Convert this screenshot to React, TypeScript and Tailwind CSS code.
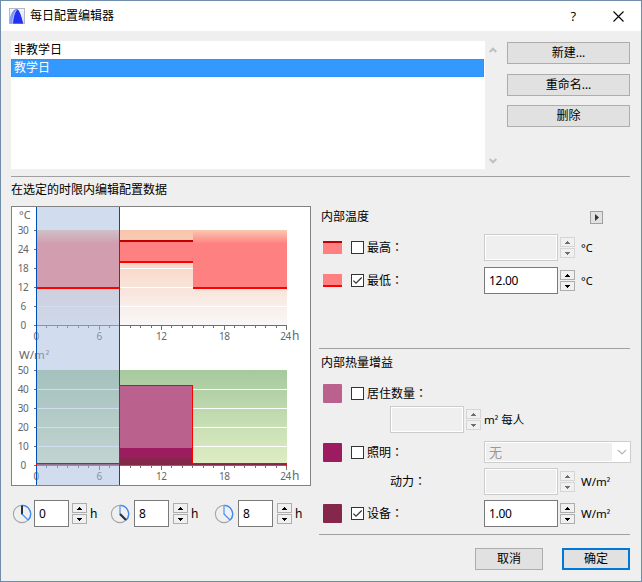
import React from "react";

function Arrow({ up, className }: { up?: boolean; className: string }) {
  return (
    <svg width="5" height="3" viewBox="0 0 5 3" shapeRendering="crispEdges" className={className}>
      {up ? <path d="M2 0h1v1h1v1h1v1H0V2h1V1h1z" fill="currentColor" /> : <path d="M0 0h5v1H4v1H3v1H2V2H1V1H0z" fill="currentColor" />}
    </svg>
  );
}

function Spinner({ disabled, className = "" }: { disabled?: boolean; className?: string }) {
  const look = disabled ? "border-[#d6d6d6] text-[#6d6d6d]" : "border-[#adadad] text-black";
  return (
    <div className={`flex w-[15px] shrink-0 flex-col gap-px ${className}`}>
      <button className={`flex h-[10px] items-center justify-center border bg-[#f0f0f0] ${look}`}><Arrow up className="block" /></button>
      <button className={`flex h-[10px] items-center justify-center border bg-[#f0f0f0] ${look}`}><Arrow className="block" /></button>
    </div>
  );
}

function Field({ value, disabled, className = "w-[74px]" }: { value?: string; disabled?: boolean; className?: string }) {
  return disabled ? (
    <div className={`h-[27px] shrink-0 border border-[#cccccc] bg-[#efefef] shadow-[inset_0_0_0_1px_#fff] ${className}`} />
  ) : (
    <div className={`flex h-[27px] shrink-0 items-center border border-[#7a7a7a] bg-white pl-[4px] tracking-[-0.3px] ${className}`}>{value}</div>
  );
}

function Check({ checked }: { checked?: boolean }) {
  return (
    <span className="ml-[9px] mr-[3px] block size-[13px] shrink-0 border border-[#333] bg-white">
      {checked && (
        <svg width="11" height="11" viewBox="0 0 11 11" className="block">
          <path d="M1.4 5.6 4 8.2 9.7 2.5" fill="none" stroke="#333" strokeWidth="1.2" />
        </svg>
      )}
    </span>
  );
}

function Label({ text, className = "" }: { text: string; className?: string }) {
  return (
    <span className={`whitespace-nowrap ${className}`}>
      {text}
      <span className="font-['Noto_Sans_CJK_TC',sans-serif]" lang="zh-TW">：</span>
    </span>
  );
}

function Unit({ base, tail = "" }: { base: string; tail?: string }) {
  return (
    <span className="whitespace-nowrap text-[11.5px]">
      {base}<span className="text-[10px]">²</span>{tail}
    </span>
  );
}

function PushButton({ children, className }: { children: React.ReactNode; className: string }) {
  return <button className={`flex h-[22px] shrink-0 items-center justify-center bg-[#e1e1e1] pb-px ${className}`}>{children}</button>;
}

function Clock({ mark }: { mark: "start" | "end" | "span" }) {
  return (
    <svg width="20" height="20" viewBox="0 0 20 20" className="shrink-0">
      <circle cx="10" cy="10" r="8.6" fill="#f0f0f0" stroke="#a3a7a9" strokeWidth="1.1" />
      <path d="M10 1.4A8.6 8.6 0 0 1 16.1 16.1" fill="none" stroke="#3f8bf2" strokeWidth="1.3" />
      <path d="M10 1.5V10.5" stroke={mark === "start" ? "#26323c" : "#7fb2f5"} strokeWidth={mark === "start" ? 2 : 1.8} />
      <path d="M10 10l6 6" stroke={mark === "end" ? "#26323c" : "#4b93f3"} strokeWidth={mark === "end" ? 2.2 : 1.3} />
    </svg>
  );
}

function Chevron({ up }: { up?: boolean }) {
  return (
    <svg width="8" height="6" viewBox="0 0 8 6">
      <path d={up ? "M.7 5 4 1.7 7.3 5" : "M.7 1 4 4.3 7.3 1"} fill="none" stroke="#bfbfbf" strokeWidth="2" />
    </svg>
  );
}

const hours = Array.from({ length: 25 }, (_, i) => i);
const hx = (h: number) => Math.round(24 + h * 10.4167);

function Axis({ y, labels }: { y: number; labels: string[] }) {
  return (
    <g>
      <rect x="24" y={y} width="251" height="1" fill="#6e6e6e" />
      {hours.map((h) => (
        <rect key={h} x={hx(h)} y={y} width="1" height={h % 6 === 0 ? 5 : 3} fill="#6e6e6e" />
      ))}
      {labels.map((t, i) => (
        <g key={t}>
          <rect x="22" y={y - i * 19} width="3" height="1" fill="#6e6e6e" />
          <text x="11" y={y - i * 19 + 4} textAnchor="middle" letterSpacing="-0.5">{t}</text>
        </g>
      ))}
      {[0, 6, 12, 18].map((h) => (
        <text key={h} x={hx(h) + 0.2} y={y + 15} textAnchor="middle" letterSpacing="-0.5">{h}</text>
      ))}
      <text x="273.5" y={y + 15} textAnchor="middle" letterSpacing="-0.5">24</text>
      <text x="280" y={y + 15} fontSize="12">h</text>
    </g>
  );
}

function Charts() {
  return (
    <svg width="298" height="278" viewBox="0 0 298 278" shapeRendering="crispEdges" className="block bg-white text-[10px]" fill="#666" fontFamily="'Noto Sans', 'Noto Sans CJK SC', sans-serif">
      <defs>
        <linearGradient id="peach" x1="0" y1="0" x2="0" y2="1"><stop stopColor="#f9c5ac" /><stop offset="1" stopColor="#f8f8f8" /></linearGradient>
        <linearGradient id="rose" x1="0" y1="0" x2="0" y2="1"><stop stopColor="#f9c9b1" /><stop offset="0.24" stopColor="#ff8080" /></linearGradient>
        <linearGradient id="green" x1="0" y1="0" x2="0" y2="1"><stop stopColor="#a6c99e" /><stop offset="1" stopColor="#e0eec4" /></linearGradient>
      </defs>
      <rect x="24" y="23" width="251" height="95" fill="url(#peach)" />
      {[42, 61, 80, 99].map((y) => <rect key={y} x="24" y={y} width="251" height="1" fill="#fff" />)}
      <rect x="24" y="23" width="83" height="58" fill="url(#rose)" />
      <rect x="181" y="23" width="94" height="58" fill="url(#rose)" />
      <rect x="107" y="34" width="74" height="21" fill="#ff8080" />
      <rect x="24" y="163" width="251" height="95" fill="url(#green)" />
      {[182, 201, 220, 239].map((y) => <rect key={y} x="24" y={y} width="251" height="1" fill="#fff" />)}
      <rect x="108" y="179" width="72" height="62" fill="#ba618d" />
      <rect x="108" y="241" width="72" height="10" fill="#9d1c60" />
      <rect x="108" y="251" width="72" height="7" fill="#85264b" />
      <rect x="24" y="257" width="251" height="1" fill="#85264b" />
      <Axis y={118} labels={["0", "6", "12", "18", "24", "30"]} />
      <Axis y={258} labels={["0", "10", "20", "30", "40", "50"]} />
      <text x="7" y="12" fontSize="11">°C</text>
      <text x="7" y="152" fontSize="11.5">W/m<tspan dx="1" fontSize="10">²</tspan></text>
      <rect x="24" y="0" width="84" height="278" fill="#a3b9dd" fillOpacity="0.5" />
      <rect x="24" y="80" width="84" height="2" fill="#f00" />
      <rect x="107" y="33" width="74" height="2" fill="#c00000" />
      <rect x="107" y="54" width="74" height="2" fill="#f00" />
      <rect x="181" y="80" width="94" height="2" fill="#f00" />
      <rect x="24" y="0" width="1" height="278" fill="#0050b4" />
      <rect x="107" y="0" width="1" height="278" fill="#0050b4" />
      <path d="M24.5 258.5V256.5H107.5V178.5H180.5V256.5H274.5V258.5" fill="none" stroke="#f00" />
    </svg>
  );
}

export default function App() {
  return (
    <div className="flex h-[582px] w-[642px] flex-col overflow-hidden border border-[#6f8ca9] bg-[#efefef] font-['Noto_Sans','Noto_Sans_CJK_SC',sans-serif] text-[12px] leading-[18px] text-black" lang="zh-CN">
      <header className="flex h-[30px] shrink-0 items-center bg-white pl-[8px]">
        <svg width="16" height="16" viewBox="0 0 16 16">
          <defs>
            <linearGradient id="sweep"><stop stopColor="#8fa6f8" /><stop offset="1" stopColor="#3a5cf6" /></linearGradient>
            <linearGradient id="tile" x2="0" y2="1"><stop stopColor="#f4f6fb" /><stop offset="1" stopColor="#d9dce6" /></linearGradient>
          </defs>
          <rect x=".5" y=".5" width="15" height="15" fill="url(#tile)" stroke="#b4b8c6" />
          <path d="M.5 15.500V11C1.800 6 4 1.500 7.500 1c2.800 0 4.500 6.500 6.500 14.500z" fill="url(#sweep)" />
          <path d="M8 1.500C5.800 3.500 4.300 9 3.800 15.500H14C12.200 8 10.500 2 8 1.500z" fill="#2430f0" />
          <path d="M3.500 15.500C4 9 5.300 4.500 7.600 1.800" fill="none" stroke="#c5d0fc" strokeWidth=".8" />
        </svg>
        <h1 className="ml-[5px] flex-1">每日配置编辑器</h1>
        <span className="mr-[37px] font-['Open_Sans',sans-serif] text-[13px] font-medium">?</span>
        <svg width="11" height="11" viewBox="0 0 11 11" className="mr-[17px]"><path d="M.5.5l10 10M10.5.5l-10 10" stroke="#000" strokeWidth="1.1" /></svg>
      </header>

      <section className="ml-[10px] mt-[10px] flex h-[128px] w-[619px] shrink-0">
        <ul className="w-[474px] bg-white">
          <li className="h-[18px] pl-[3px] leading-[17px]">非教学日</li>
          <li className="mr-px h-[18px] border border-dotted border-[#cc6600] bg-[#3399ff] pl-[2px] leading-[16px] text-white">教学日</li>
        </ul>
        <div className="flex w-[15px] flex-col items-center justify-between py-[6px] pb-[5px]"><Chevron up /><Chevron /></div>
        <div className="ml-[7px] flex w-[123px] flex-col pt-px">
          <PushButton className="border border-[#adadad]">新建...</PushButton>
          <PushButton className="mt-[10px] border border-[#adadad]">重命名...</PushButton>
          <PushButton className="mt-[9px] border border-[#adadad]">删除</PushButton>
        </div>
      </section>

      <hr className="ml-[10px] mt-[7px] w-[619px] shrink-0 border-[#a0a0a0]" />

      <main className="ml-[10px] flex min-h-0 flex-1">
        <div className="flex w-[300px] flex-col">
          <h2 className="h-[29px] pt-[4px]">在选定的时限内编辑配置数据</h2>
          <div className="h-[280px] w-[300px] border border-[#828282]"><Charts /></div>
          <div className="mt-[14px] flex items-center pl-px">
            <Clock mark="start" />
            <Field value="0" className="ml-[2px] w-[35px]" /><Spinner className="ml-[3px]" /><span className="ml-[3px] w-[8px]">h</span>
            <span className="ml-[12px] flex"><Clock mark="end" /></span>
            <Field value="8" className="ml-[4px] w-[35px]" /><Spinner className="ml-[4px]" /><span className="ml-[3px] w-[8px]">h</span>
            <span className="ml-[15px] flex"><Clock mark="span" /></span>
            <Field value="8" className="ml-[4px] w-[35px]" /><Spinner className="ml-[4px]" /><span className="ml-[3px] w-[8px]">h</span>
          </div>
        </div>

        <div className="ml-[8px] flex w-[312px] flex-col pt-[29px]">
          <div className="flex h-[22px] items-center pl-[2px]">
            <h2 className="w-[269px]">内部温度</h2>
            <button className="flex size-[13px] items-center justify-center border border-[#a0a0a0] bg-[#e1e1e1]">
              <svg width="4" height="7" viewBox="0 0 4 7"><path d="M0 0l4 3.5L0 7z" fill="#333" /></svg>
            </button>
          </div>
          <div className="mt-[6px] flex h-[27px] items-center pl-[4px]">
            <span className="h-[13px] w-[19px] border-t-2 border-[#c00000] bg-[#ff8080]" /><Check />
            <Label text="最高" className="w-[117px]" />
            <Field disabled /><Spinner disabled className="ml-[2px]" /><span className="ml-[6px] text-[11px]">°C</span>
          </div>
          <div className="mt-[6px] flex h-[27px] items-center pl-[4px]">
            <span className="h-[13px] w-[19px] border-b-2 border-[#ff0000] bg-[#ff8080]" /><Check checked />
            <Label text="最低" className="w-[117px]" />
            <Field value="12.00" /><Spinner className="ml-[2px]" /><span className="ml-[6px] text-[11px]">°C</span>
          </div>

          <hr className="mt-[54px] w-[311px] shrink-0 border-[#a0a0a0]" />
          <h2 className="mt-[5px] h-[18px] pl-[2px]">内部热量增益</h2>
          <div className="mt-[8px] flex h-[27px] items-center pl-[4px]">
            <span className="size-[19px] rounded-[1px] bg-[#ba618d]" /><Check />
            <Label text="居住数量" />
          </div>
          <div className="-mt-px flex h-[27px] items-center pl-[71px]">
            <Field disabled /><Spinner disabled className="ml-[2px]" /><span className="ml-[3px] flex"><Unit base="m" tail=" 每人" /></span>
          </div>
          <div className="mt-[6px] flex h-[26px] items-center pl-[4px]">
            <span className="size-[19px] rounded-[1px] bg-[#9d1c60]" /><Check />
            <Label text="照明" className="w-[117px]" />
            <div className="flex h-[22px] w-[147px] shrink-0 items-center border border-[#cccccc] bg-white py-px pl-px">
              <span className="flex h-[18px] flex-1 items-center bg-[#efefef] pl-[3px] text-[13px] text-[#999]">无</span>
              <svg width="18" height="18" viewBox="0 0 18 18" className="shrink-0"><path d="M6 7l4 4 4-4" fill="none" stroke="#b5b5b5" strokeWidth="1.1" /></svg>
            </div>
          </div>
          <div className="mt-[3px] flex h-[27px] items-center pl-[71px]">
            <Label text="动力" className="w-[94px]" />
            <Field disabled /><Spinner disabled className="ml-[2px]" /><span className="ml-[6px] flex"><Unit base="W/m" /></span>
          </div>
          <div className="mt-[5px] flex h-[27px] items-center pl-[4px]">
            <span className="size-[19px] rounded-[1px] bg-[#85264b]" /><Check checked />
            <Label text="设备" className="w-[117px]" />
            <Field value="1.00" /><Spinner className="ml-[2px]" /><span className="ml-[6px] flex"><Unit base="W/m" /></span>
          </div>
          <hr className="mt-[7px] w-[311px] shrink-0 border-[#a0a0a0]" />
          <div className="mt-[13px] flex w-[311px] justify-end gap-[19px]">
            <PushButton className="w-[68px] border border-[#adadad]">取消</PushButton>
            <PushButton className="w-[68px] border-2 border-[#0078d7]">确定</PushButton>
          </div>
        </div>
      </main>
    </div>
  );
}
